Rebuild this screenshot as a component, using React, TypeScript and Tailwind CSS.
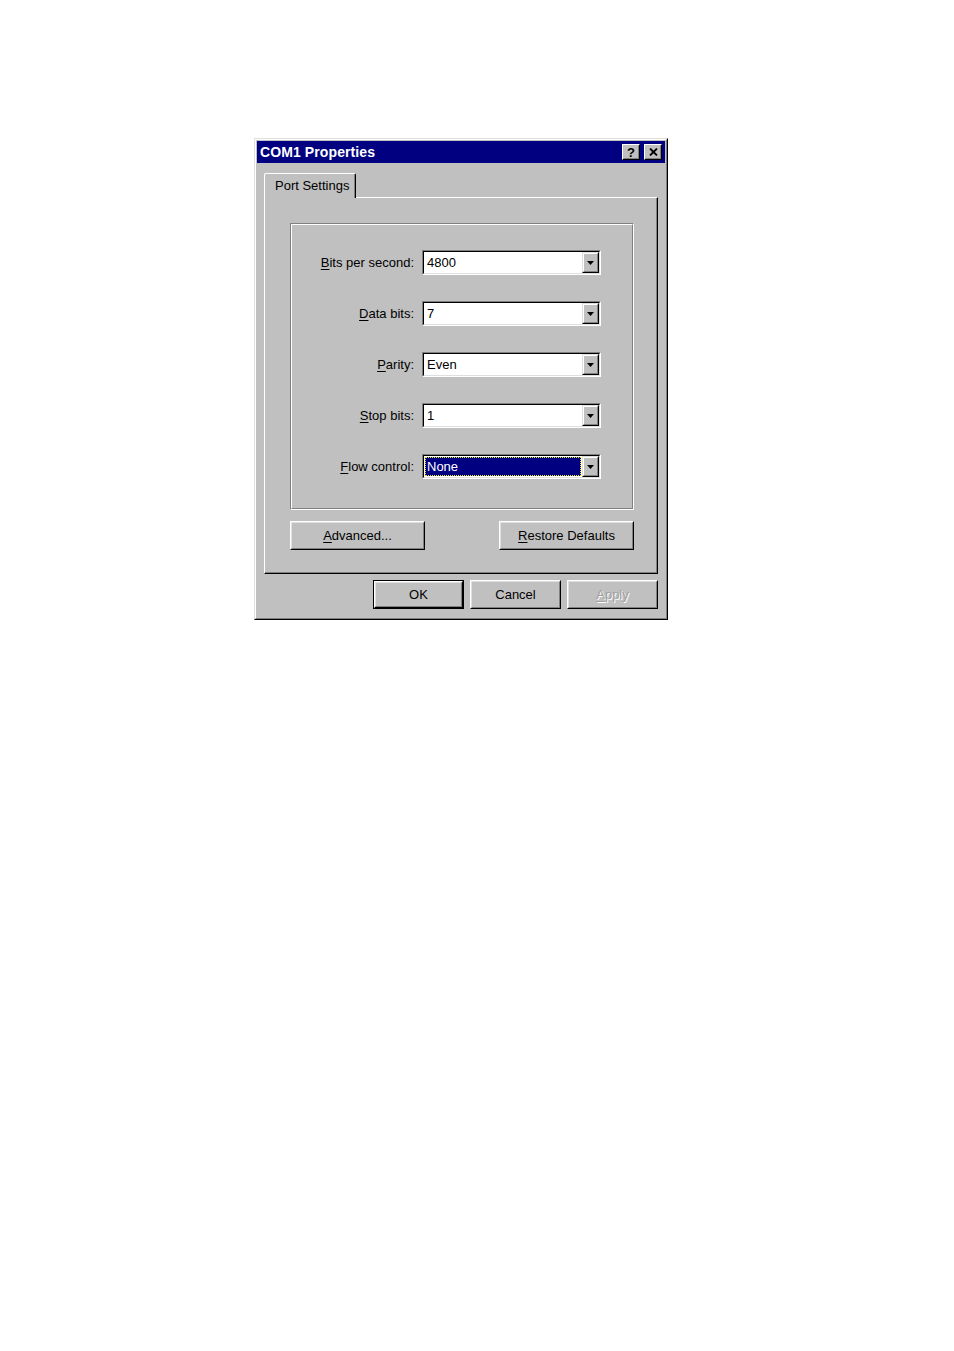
import React from "react";

const FONT = { fontFamily: '"Liberation Sans", Arial, sans-serif' };

function Ul({ k, rest }: { k: string; rest: string }) {
  return (
    <>
      <span className="underline underline-offset-[2px]">{k}</span>
      {rest}
    </>
  );
}

function Arrow() {
  return (
    <svg width="7" height="4" viewBox="0 0 7 4" className="block">
      <path d="M0 0h7L3.5 4z" fill="#000" />
    </svg>
  );
}

function Combo({ value, focused }: { value: string; focused?: boolean }) {
  return (
    <div className="w-[179px] h-[25px] border border-t-[#808080] border-l-[#808080] border-r-white border-b-white">
      <div className="h-full flex border border-t-black border-l-black border-r-[#dfdfdf] border-b-[#dfdfdf] bg-white">
        <div className="flex-1 flex items-center p-[1px]">
          {focused ? (
            <div className="h-full w-full flex items-center bg-[#000080] text-white border border-dotted border-[#e8e800] pl-[1px]">
              {value}
            </div>
          ) : (
            <span className="pl-[2px] text-black">{value}</span>
          )}
        </div>
        <div className="w-[17px] h-full border border-t-[#dfdfdf] border-l-[#dfdfdf] border-r-black border-b-black bg-[#c0c0c0]">
          <div className="h-full flex items-center justify-center border border-t-white border-l-white border-r-[#808080] border-b-[#808080]">
            <Arrow />
          </div>
        </div>
      </div>
    </div>
  );
}

function Btn({
  children,
  w,
  isDefault,
  disabled,
}: {
  children: React.ReactNode;
  w: string;
  isDefault?: boolean;
  disabled?: boolean;
}) {
  const inner = (
    <div className="h-full border border-t-white border-l-white border-r-black border-b-black">
      <div
        className={
          "h-full flex items-center justify-center border border-t-[#dfdfdf] border-l-[#dfdfdf] border-r-[#808080] border-b-[#808080] " +
          (disabled ? "text-[#a0a0a0] [text-shadow:1px_1px_0_#fff]" : "text-black")
        }
      >
        {children}
      </div>
    </div>
  );
  return (
    <div className={w + " h-[29px] " + (isDefault ? "border border-black" : "")}>{inner}</div>
  );
}

const rows: { k: string; rest: string; value: string; focused?: boolean }[] = [
  { k: "B", rest: "its per second:", value: "4800" },
  { k: "D", rest: "ata bits:", value: "7" },
  { k: "P", rest: "arity:", value: "Even" },
  { k: "S", rest: "top bits:", value: "1" },
  { k: "F", rest: "low control:", value: "None", focused: true },
];

export default function App() {
  return (
    <div className="min-h-[1351px] bg-white pt-[138px] pl-[254px] text-[13px] leading-none" style={FONT}>
      <div className="w-[414px] h-[482px] bg-[#c0c0c0] border border-t-[#dfdfdf] border-l-[#dfdfdf] border-r-black border-b-black">
        <div className="h-full flex flex-col p-[1px] border border-t-white border-l-white border-r-[#808080] border-b-[#808080]">
          {/* title bar */}
          <div className="h-[22px] flex items-center justify-between bg-[#000080] pl-[3px] pr-[3px]">
            <span className="text-white font-bold text-[14px] tracking-[0.1px]">COM1 Properties</span>
            <div className="flex gap-[4px]">
              <div className="w-[18px] h-[16px] bg-[#c0c0c0] border border-t-white border-l-white border-r-black border-b-black">
                <div className="h-full flex items-center justify-center border border-r-[#808080] border-b-[#808080] border-t-transparent border-l-transparent font-bold text-[13px] text-black">
                  ?
                </div>
              </div>
              <div className="w-[18px] h-[16px] bg-[#c0c0c0] border border-t-white border-l-white border-r-black border-b-black">
                <div className="h-full flex items-center justify-center border border-r-[#808080] border-b-[#808080] border-t-transparent border-l-transparent">
                  <svg width="9" height="8" viewBox="0 0 9 8">
                    <path d="M1 0.5l7 7M8 0.5l-7 7" stroke="#000" strokeWidth="1.8" />
                  </svg>
                </div>
              </div>
            </div>
          </div>

          {/* body */}
          <div className="flex flex-col px-[7px] pt-[10px]">
            {/* tab strip */}
            <div className="flex">
              <div className="relative z-10 -mb-[1px] w-[92px] h-[25px] bg-[#c0c0c0] rounded-tl-[2px] rounded-tr-[2px] border-t border-l border-r border-t-white border-l-white border-r-black">
                <div className="h-full flex items-center pl-[10px] pb-[2px] border-r border-r-[#808080] text-black">
                  Port Settings
                </div>
              </div>
            </div>

            {/* tab panel */}
            <div className="h-[377px] border border-t-white border-l-white border-r-black border-b-black">
              <div className="h-full flex flex-col pl-[25px] pr-[22px] pt-[25px] border-r border-b border-r-[#808080] border-b-[#808080]">
                {/* group */}
                <div className="h-[287px] border border-t-[#808080] border-l-[#808080] border-r-white border-b-white">
                  <div className="h-full flex flex-col gap-[26px] pt-[25px] pr-[31px] border border-t-white border-l-white border-r-[#808080] border-b-[#808080]">
                    {rows.map((r) => (
                      <div key={r.k} className="flex items-center justify-end gap-[8px]">
                        <span className="text-black">
                          <Ul k={r.k} rest={r.rest} />
                        </span>
                        <Combo value={r.value} focused={r.focused} />
                      </div>
                    ))}
                  </div>
                </div>

                <div className="flex justify-between mt-[11px]">
                  <Btn w="w-[135px]">
                    <Ul k="A" rest="dvanced..." />
                  </Btn>
                  <Btn w="w-[135px]">
                    <Ul k="R" rest="estore Defaults" />
                  </Btn>
                </div>
              </div>
            </div>

            {/* dialog buttons */}
            <div className="flex justify-end gap-[6px] mt-[6px]">
              <Btn w="w-[91px]" isDefault>
                OK
              </Btn>
              <Btn w="w-[91px]">Cancel</Btn>
              <Btn w="w-[91px]" disabled>
                <Ul k="A" rest="pply" />
              </Btn>
            </div>
          </div>
        </div>
      </div>
    </div>
  );
}
